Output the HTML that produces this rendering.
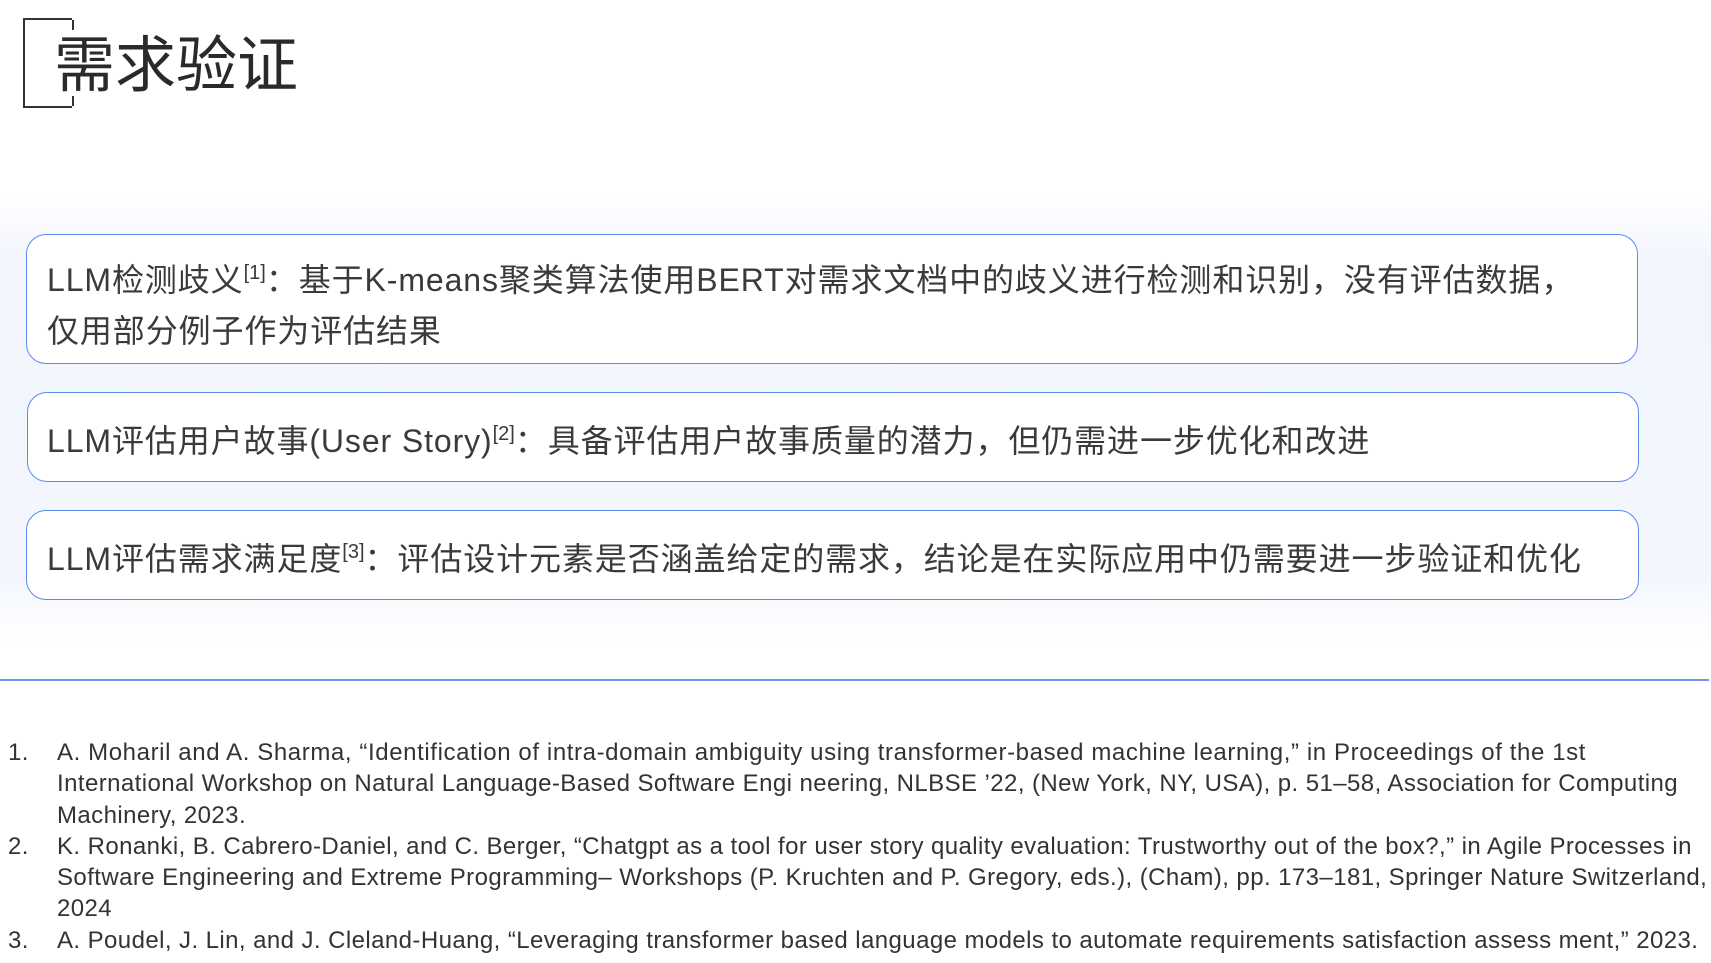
<!DOCTYPE html>
<html><head><meta charset="utf-8"><style>
html,body{margin:0;padding:0;background:#fff;}
body{width:1711px;height:963px;position:relative;overflow:hidden;font-family:"Liberation Sans","Noto Sans CJK SC",sans-serif;color:#3a3a3a;}
.glow{position:absolute;left:0;top:195px;width:1711px;height:450px;background:linear-gradient(180deg,rgba(240,244,252,0) 0%,rgba(240,244,252,.9) 15%,rgba(242,246,253,.9) 85%,rgba(240,244,252,0) 100%);}
.br{position:absolute;left:23px;top:18px;width:47px;height:86px;border:2px solid #333;border-right:none;}
.br:before,.br:after{content:"";position:absolute;right:-2px;width:2px;height:10px;background:#333;}
.br:before{top:0}.br:after{bottom:0}
.title{position:absolute;left:54px;top:20px;font-size:61px;color:#2a2a2a;font-family:"Noto Sans CJK SC",sans-serif;line-height:80px;}
.box{position:absolute;background:#fff;border:1.5px solid #5b8af0;border-radius:20px;box-sizing:border-box;}
.t{position:absolute;font-size:32px;white-space:nowrap;font-family:"Liberation Sans","Noto Sans CJK SC",sans-serif;color:#3a3a3a;line-height:51px;letter-spacing:0.9px;}
sup{font-size:20px;vertical-align:12px;line-height:0;letter-spacing:0}
.hr{position:absolute;left:0;top:679px;width:1709px;height:1.5px;background:#6d96ee;}
.ref{position:absolute;font-size:24px;white-space:nowrap;line-height:31.3px;color:#333;letter-spacing:0.42px;}
</style></head><body>
<div class="glow"></div>
<div class="br"></div>
<div class="title">需求验证</div>
<div class="box" style="left:26px;top:234px;width:1612px;height:130px"></div>
<div class="box" style="left:27px;top:392px;width:1612px;height:90px"></div>
<div class="box" style="left:26px;top:510px;width:1613px;height:90px"></div>
<div class="t" style="left:47px;top:255px">LLM检测歧义<sup>[1]</sup>：基于K-means聚类算法使用BERT对需求文档中的歧义进行检测和识别，没有评估数据，</div>
<div class="t" style="left:47px;top:306px">仅用部分例子作为评估结果</div>
<div class="t" style="left:47px;top:416px">LLM评估用户故事(User Story)<sup>[2]</sup>：具备评估用户故事质量的潜力，但仍需进一步优化和改进</div>
<div class="t" style="left:47px;top:534px">LLM评估需求满足度<sup>[3]</sup>：评估设计元素是否涵盖给定的需求，结论是在实际应用中仍需要进一步验证和优化</div>
<div class="hr"></div>
<div class="ref" style="left:8px;top:737px">1.<br><br><br>2.<br><br><br>3.</div>
<div class="ref" style="left:57px;top:737px"><span style="letter-spacing:0.6px">A. Moharil and A. Sharma, “Identification of intra-domain ambiguity using transformer-based machine learning,” in Proceedings of the 1st</span><br>International Workshop on Natural Language-Based Software Engi neering, NLBSE ’22, (New York, NY, USA), p. 51–58, Association for Computing<br>Machinery, 2023.<br>K. Ronanki, B. Cabrero-Daniel, and C. Berger, “Chatgpt as a tool for user story quality evaluation: Trustworthy out of the box?,” in Agile Processes in<br>Software Engineering and Extreme Programming– Workshops (P. Kruchten and P. Gregory, eds.), (Cham), pp. 173–181, Springer Nature Switzerland,<br>2024<br>A. Poudel, J. Lin, and J. Cleland-Huang, “Leveraging transformer based language models to automate requirements satisfaction assess ment,” 2023.</div>
</body></html>
